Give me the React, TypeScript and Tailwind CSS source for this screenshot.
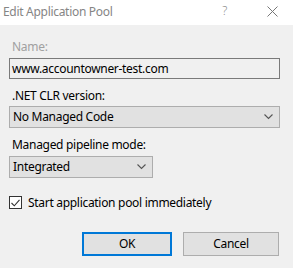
import React from "react";

function Chevron() {
  return (
    <svg width="9" height="6" viewBox="0 0 9 6" className="block">
      <path d="M0.5 0.5 L4.5 4.5 L8.5 0.5" fill="none" stroke="#555" strokeWidth="1.1" />
    </svg>
  );
}

export default function App() {
  const font = { fontFamily: '"Noto Sans", "Segoe UI", Arial, sans-serif' };
  return (
    <div className="w-[293px] h-[268px] bg-[#f0f0f0] text-[12px] tracking-[-0.3px] text-black overflow-hidden" style={font}>
      <div className="h-[25px] bg-white flex items-center pl-[3px] pr-[15px]">
        <span className="text-[#858585] leading-[16px] flex-1 -mt-[2px]">Edit Application Pool</span>
        <span className="text-[#8a8a8a] leading-[16px] mr-[40px] -mt-[3px] font-light">?</span>
        <svg width="11" height="11" viewBox="0 0 11 11" className="-mt-[3px]">
          <path d="M0.5 0.5 L10.5 10.5 M10.5 0.5 L0.5 10.5" stroke="#777" strokeWidth="1" />
        </svg>
      </div>
      <div className="pl-[9px] pr-[13px]">
        <div className="mt-[14px] leading-[16px] pl-[3px] text-[#a0a0a0]">Name:</div>
        <div className="mt-[3px] h-[21px] w-[271px] border border-[#7a7a7a] bg-[#f0f0f0] flex items-center pl-[2px] leading-[16px]">
          www.accountowner-test.com
        </div>
        <div className="mt-[9px] leading-[16px] pl-[3px]">.NET CLR version:</div>
        <div className="mt-[2px] h-[22px] w-[271px] border border-[#adadad] bg-[#e1e1e1] flex items-center pl-[3px] pr-[6px] leading-[16px]">
          <span className="flex-1">No Managed Code</span>
          <Chevron />
        </div>
        <div className="mt-[9px] leading-[16px] pl-[3px]">Managed pipeline mode:</div>
        <div className="mt-[3px] h-[22px] w-[144px] border border-[#adadad] bg-[#e1e1e1] flex items-center pl-[3px] pr-[6px] leading-[16px]">
          <span className="flex-1">Integrated</span>
          <Chevron />
        </div>
        <div className="mt-[18px] flex items-center h-[13px]">
          <div className="w-[13px] h-[13px] border border-[#333] bg-white flex items-center justify-center">
            <svg width="9" height="8" viewBox="0 0 9 8">
              <path d="M0.5 4 L3.3 6.8 L8.5 0.8" fill="none" stroke="#333" strokeWidth="1.1" />
            </svg>
          </div>
          <span className="ml-[6px] leading-[16px]">Start application pool immediately</span>
        </div>
        <div className="mt-[23px] flex justify-end pr-[1px] gap-[11px]">
          <button className="w-[90px] h-[24px] border-2 border-[#0078d7] bg-[#e1e1e1] leading-[16px] flex items-center justify-center">
            OK
          </button>
          <button className="w-[96px] h-[24px] border border-[#adadad] bg-[#e1e1e1] leading-[16px] flex items-center justify-center">
            Cancel
          </button>
        </div>
      </div>
    </div>
  );
}
